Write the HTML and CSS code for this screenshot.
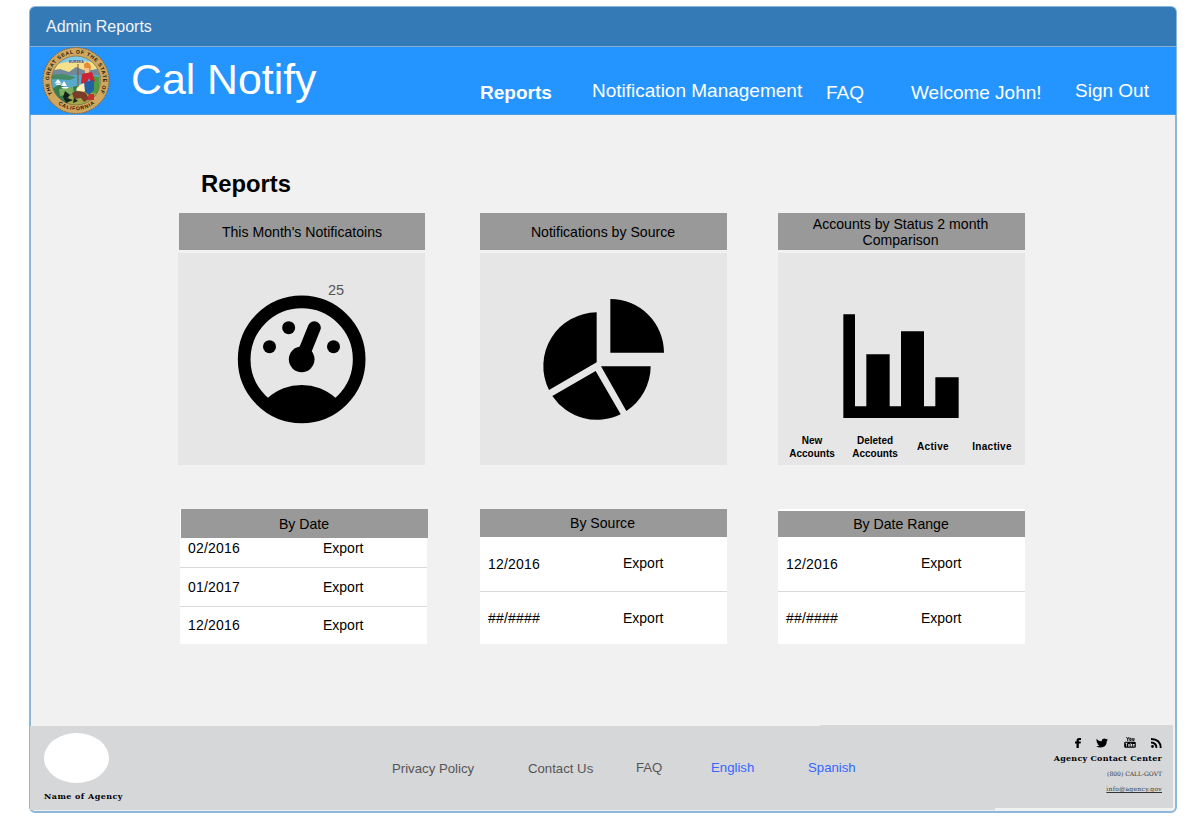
FILE: index.html
```html
<!DOCTYPE html>
<html lang="en">
<head>
<meta charset="utf-8">
<title>Admin Reports</title>
<link rel="stylesheet" href="styles.css">
</head>
<body>
<div class="frame">
  <div class="titlebar">Admin Reports</div>
  <header class="brandbar">
    <svg class="seal" viewBox="0 0 68 67">
      <defs>
        <clipPath id="scene"><circle cx="34" cy="33.5" r="24.5"/></clipPath>
        <path id="ringTop" d="M10.600 47A27 27 0 1 1 57.400 47"/>
        <path id="ringBottom" d="M13 54.400A29.700 29.700 0 0 0 55 54.400"/>
      </defs>
      <circle cx="34" cy="33.500" r="33" fill="#d1a75f" stroke="#8d6a35" stroke-width="1.2" stroke-dasharray="1.5 1"/>
      <g clip-path="url(#scene)">
        <rect width="68" height="67" fill="#83d3e6"/>
        <path d="M10 14H58V27H10Z" fill="#f5e18c"/>
        <path d="M10 8H58V17Q34 10 10 19Z" fill="#7ecbea"/>
        <path d="M8 24L18 22L27 25L34 20L44 24L60 21V31H8Z" fill="#72899b"/>
        <path d="M8 28H60V47H8Z" fill="#58a9ca"/>
        <path d="M8 28L20 27L34 30L28 33L8 32Z" fill="#458b67"/>
        <path d="M8 43L18 37L24 42L34 39L60 43V62H8Z" fill="#347b4f"/>
        <path d="M17 42L31 40L32 47L18 49Z" fill="#7dae60"/>
        <path d="M27 49L38 43L58 47V62H24Z" fill="#a3a84d"/>
        <path d="M51 29L57 30V47L50 46Z" fill="#4e9b41"/>
      </g>
      <circle cx="34" cy="33.500" r="24.500" fill="none" stroke="#8c713c" stroke-width=".8"/>
      <path d="M16 32L19 36H13ZM22 34L25 39H19Z" fill="#fff"/>
      <path d="M13 36.500H20L18 38H15ZM19 40H27L25 41.500H21Z" fill="#fff"/>
      <path d="M42 17L45 15L48 17L49 20L48 25L43 25Z" fill="#e88a35"/>
      <path d="M43 21H47V26H43Z" fill="#f6c38b"/>
      <path d="M40 27L50 25L53 34L50 38L47 31L44 38L39 36Z" fill="#cc2435"/>
      <path d="M43 35L52 33L52 43L47 48L41 43Z" fill="#2361a5"/>
      <path d="M36 39L42 36L43 44L38 46L34 43Z" fill="#fff0b4"/>
      <path d="M36 17V40" stroke="#80502a" stroke-width="1"/>
      <path d="M30 46Q36 42 44 46L47 52L42 55L39 51L32 52Z" fill="#7b3d28"/>
      <path d="M47 47H52V53H45Z" fill="#c22f30"/>
      <path d="M23 44L28 48L25 51L31 53L24 56L21 50ZM32 51L36 54L31 56Z" fill="#13231c"/>
      <text class="seal-motto" x="27" y="16">EUREKA</text>
      <text class="seal-text"><textPath href="#ringTop" textLength="111">THE GREAT SEAL OF THE STATE OF</textPath></text>
      <text class="seal-text"><textPath href="#ringBottom" startOffset="4" textLength="39">CALIFORNIA</textPath></text>
    </svg>
    <h1 class="brand">Cal Notify</h1>
    <nav class="nav">
      <a class="nav-item nav-active">Reports</a>
      <a class="nav-item nav-manage nav-raised">Notification Management</a>
      <a class="nav-item nav-faq">FAQ</a>
      <a class="nav-item nav-user">Welcome John!</a>
      <a class="nav-item nav-out nav-raised">Sign Out</a>
    </nav>
  </header>

  <main class="main">
    <h2 class="heading">Reports</h2>
    <div class="cards">
      <section class="card card-first">
        <h3 class="card-head">This Month's Notificatoins</h3>
        <div class="card-body">
          <svg class="chart" viewBox="24 279 741 636">
            <circle cx="395" cy="598" r="172.500" fill="none" stroke="#000" stroke-width="38"/>
            <path d="M293 714A152 152 0 0 1 497 714L510 735L395 780L280 735Z"/>
            <circle cx="395" cy="598" r="38.500"/>
            <path d="M433 503L399 587" stroke="#000" stroke-width="39" stroke-linecap="round"/>
            <circle cx="298.500" cy="560" r="19.500"/><circle cx="356" cy="503" r="19.500"/><circle cx="490.500" cy="560" r="19.500"/>
          </svg>
          <span class="gauge-value">25</span>
        </div>
      </section>
      <section class="card card-source">
        <h3 class="card-head">Notifications by Source</h3>
        <div class="card-body">
          <svg class="chart" viewBox="30 159 741 636">
            <path d="M421 297A161 161 0 0 1 582 458H421ZM380 337V487L237 570A161 161 0 0 1 380 337ZM377 513L452 643A161 161 0 0 1 247 588ZM393 499H542A161 161 0 0 1 469 633Z"/>
          </svg>
        </div>
      </section>
      <section class="card card-status">
        <h3 class="card-head">Accounts by Status 2 month Comparison</h3>
        <div class="card-body">
          <svg class="chart" viewBox="39 159 741 636">
            <path d="M235 343H270V619H304V463H374V619H408V394H477V619H511V532H581V654H235Z"/>
          </svg>
          <div class="bar-labels"><span>New Accounts</span><span>Deleted Accounts</span><span class="single">Active</span><span class="single">Inactive</span></div>
        </div>
      </section>
    </div>

    <div class="tables">
      <section class="table table-date">
        <h3 class="table-head">By Date</h3>
        <div class="row"><span class="date">02/2016</span><a>Export</a></div>
        <div class="row"><span class="date">01/2017</span><a>Export</a></div>
        <div class="row"><span class="date">12/2016</span><a>Export</a></div>
      </section>
      <section class="table table-source">
        <h3 class="table-head">By Source</h3>
        <div class="row"><span class="date">12/2016</span><a>Export</a></div>
        <div class="row"><span class="date">##/####</span><a>Export</a></div>
      </section>
      <section class="table table-range">
        <h3 class="table-head">By Date Range</h3>
        <div class="row"><span class="date">12/2016</span><a>Export</a></div>
        <div class="row"><span class="date">##/####</span><a>Export</a></div>
      </section>
    </div>
  </main>

  <footer class="footer">
    <div class="agency"><div class="agency-logo"></div><div class="agency-name">Name of Agency</div></div>
    <nav class="links">
      <a class="link link-privacy">Privacy Policy</a>
      <a class="link link-contact">Contact Us</a>
      <a class="link link-faq">FAQ</a>
      <a class="link link-lang link-english">English</a>
      <a class="link link-lang link-spanish">Spanish</a>
    </nav>
    <div class="contact">
      <div class="social">
        <svg width="6" height="10" viewBox="0 0 6 10"><path d="M1.500 10V5.500H0V3.600H1.500V2.500Q1.500 0 4 0H6V1.900H4.700Q3.800 1.900 3.800 2.800V3.600H5.900L5.600 5.500H3.800V10Z"/></svg>
        <svg width="12" height="10" viewBox="0 0 12 10"><path d="M.6 1Q2.900 3.500 5.700 3.300Q5.500.5 8.200.4Q9.200.4 10 1.200L11.500.7L10.900 1.900L12 1.700L10.800 3Q10.700 9.300 4.500 9.500Q2 9.500.2 8.300Q2.200 8.400 3.500 7.300Q1.700 7.100 1.300 5.700H2.300Q.7 5 .5 3.400L1.500 3.600Q-.1 2.500.6 1Z"/></svg>
        <svg width="12" height="11" viewBox="0 0 12 11"><path d="M2.500 0L3.700 2.300V4M5 0L3.700 2.300M5.800 1.300H7.100V3.500H5.800ZM8.700 1V3.500H10V1" fill="none" stroke="#000" stroke-width=".9"/><path fill-rule="evenodd" d="M1.500 4.700H10.500Q11.800 4.700 11.800 6V9.400Q11.800 10.700 10.500 10.700H1.500Q.2 10.700 .2 9.400V6Q.2 4.700 1.500 4.700ZM1.300 5.700V6.500H2V9.600H2.800V6.500H3.500V5.700ZM4 7V9.600H5.800V7H5.100V8.900H4.700V7ZM6.500 5.700V9.600H8V7H7.200V5.700ZM8.700 7V9.600H10.700V8.900H9.500V8.500H10.700V7Z"/></svg>
        <svg width="11" height="10" viewBox="0 0 11 10"><circle cx="1.500" cy="8.500" r="1.400"/><path d="M0 4.500Q5.300 4.600 5.500 9.900M0 1Q9.500 1.200 9.700 9.900" fill="none" stroke="#000" stroke-width="1.900"/></svg>
      </div>
      <div class="contact-title">Agency Contact Center</div>
      <div class="contact-phone">(800) CALL-GOVT</div>
      <a class="contact-mail">info@agency.gov</a>
    </div>
  </footer>
</div>
</body>
</html>
```
FILE: styles.css
```css
* { box-sizing: border-box; }
body { margin: 0; padding: 6px 0 0 29px; background: #fff; font-family: "Liberation Sans", Arial, sans-serif; color: #000; overflow: hidden; }
h1, h2, h3 { margin: 0; font-weight: normal; }
svg { display: block; flex: none; }

.frame { width: 1148px; height: 807px; border: 2px solid #8db6db; border-top-width: 1px; border-radius: 6px; background: #f1f1f1; }
.titlebar { height: 40px; margin: 0 -1px; padding-left: 16px; border-bottom: 1px solid #86b0d6; border-radius: 5px 5px 0 0; background: #337ab7; color: #f3f3f3; font-size: 16px; line-height: 39px; }
.brandbar { display: flex; height: 68px; margin: 0 -1px; padding-left: 12px; border-bottom: 1px solid #4b9fe6; background: #2494ff; color: #fff; }
.seal { width: 68px; height: 67px; }
.seal-text { font: bold 5.2px "Liberation Sans", Arial, sans-serif; fill: #20180c; }
.seal-motto { font: bold 3.5px "Liberation Sans", Arial, sans-serif; fill: #4a438a; }
.brand { flex: none; width: 369px; padding-left: 21px; font-size: 42.8px; line-height: 64px; white-space: nowrap; }
.nav { display: flex; }
.nav-item { flex: none; font-size: 19px; line-height: 22px; padding-top: 35px; white-space: nowrap; }
.nav-raised { padding-top: 33px; }
.nav-active { width: 113px; padding-left: 1px; font-weight: bold; }
.nav-manage { width: 234px; }
.nav-faq { width: 85px; }
.nav-user { width: 164px; }

.main { height: 610px; padding: 55px 0 0 147px; }
.heading { padding-left: 23px; font-size: 23.8px; font-weight: bold; line-height: 28px; }
.cards { display: flex; gap: 51px; margin-top: 15px; }
.card { width: 247px; }
.card-source { margin-left: 4px; }
.card-head { display: flex; align-items: center; justify-content: center; height: 37px; margin-bottom: 3px; padding: 0 30px; background: #999; font-size: 14.1px; line-height: 16px; text-align: center; }
.card-first .card-head { margin-left: 1px; }
.card-source .card-head { padding-right: 31px; }
.card-status .card-head { padding-right: 32px; }
.card-body { position: relative; height: 212px; background: #e6e6e6; }
.chart { width: 247px; height: 212px; }
.gauge-value { position: absolute; left: 150px; top: 29px; color: #555; font-size: 14.5px; line-height: 17px; }
.bar-labels { position: absolute; left: 3px; bottom: 5px; display: grid; grid-template-columns: 62px 64px 52px 66px; align-items: center; font-size: 10px; font-weight: bold; line-height: 13px; text-align: center; }
.single { padding-bottom: 2px; letter-spacing: .3px; }

.tables { display: flex; margin: 44px 0 0 2px; }
.table { width: 247px; height: 135px; background: #fff; font-size: 14px; }
.table-source { margin-left: 53px; }
.table-range { margin-left: 51px; padding-top: 2px; }
.table-head { height: 28px; background: #999; font-size: 14.1px; line-height: 29px; text-align: center; padding-right: 2px; }
.table-date .table-head { height: 29px; margin: 0 -1px 0 1px; line-height: 30px; padding-right: 1px; }
.table-range .table-head { height: 26px; line-height: 26px; padding-right: 1px; }
.row { display: grid; grid-template-columns: 135px 1fr; align-items: start; height: 54px; padding: 18px 8px 0; line-height: 18px; }
.row + .row { border-top: 1px solid #d9d9d9; padding-top: 17px; }
.date { letter-spacing: .2px; }
.table-source .row:nth-child(2) a, .table-range .row:nth-child(2) a { margin-top: -1px; }
.table-date .row { height: 39px; padding-top: 10px; }
.table-date .row:nth-child(2) { height: 29px; padding-top: 1px; }
.table-date .row:nth-child(4) { padding-top: 9px; }

.footer { display: flex; width: 1143px; height: 85px; margin-left: -1px; background: #d6d7d9; clip-path: polygon(0 1px, 790px 1px, 790px 0, 100% 0, 100% 83px, 965px 83px, 965px 100%, 0 100%); }
.agency { width: 362px; padding: 8px 0 0 14px; }
.agency-logo { width: 65px; height: 50px; border-radius: 50%; background: #fff; }
.agency-name { margin-top: 7px; font: bold 8px/12px "DejaVu Serif", serif; letter-spacing: .45px; white-space: nowrap; }
.links { display: flex; width: 610px; padding-top: 34px; }
.link { color: #555; font-size: 13.2px; line-height: 18px; }
.link-privacy { width: 136px; padding-top: 1px; }
.link-contact { width: 108px; padding-top: 1px; }
.link-faq { width: 75px; }
.link-lang { color: #3366ff; }
.link-english { width: 97px; }
.contact { display: flex; flex-direction: column; align-items: flex-end; width: 160px; padding-top: 12px; white-space: nowrap; }
.social { display: flex; justify-content: space-between; align-items: center; width: 87px; height: 11px; margin-bottom: 3px; }
.contact-title { font: bold 8px/14px "DejaVu Serif", serif; letter-spacing: .25px; }
.contact-phone { margin-top: 3px; font: 6px/12px "DejaVu Serif", serif; color: #333; }
.contact-mail { margin-top: 3px; font: 6px/11px "DejaVu Serif", serif; letter-spacing: .3px; color: #333; text-decoration: underline; }
```
